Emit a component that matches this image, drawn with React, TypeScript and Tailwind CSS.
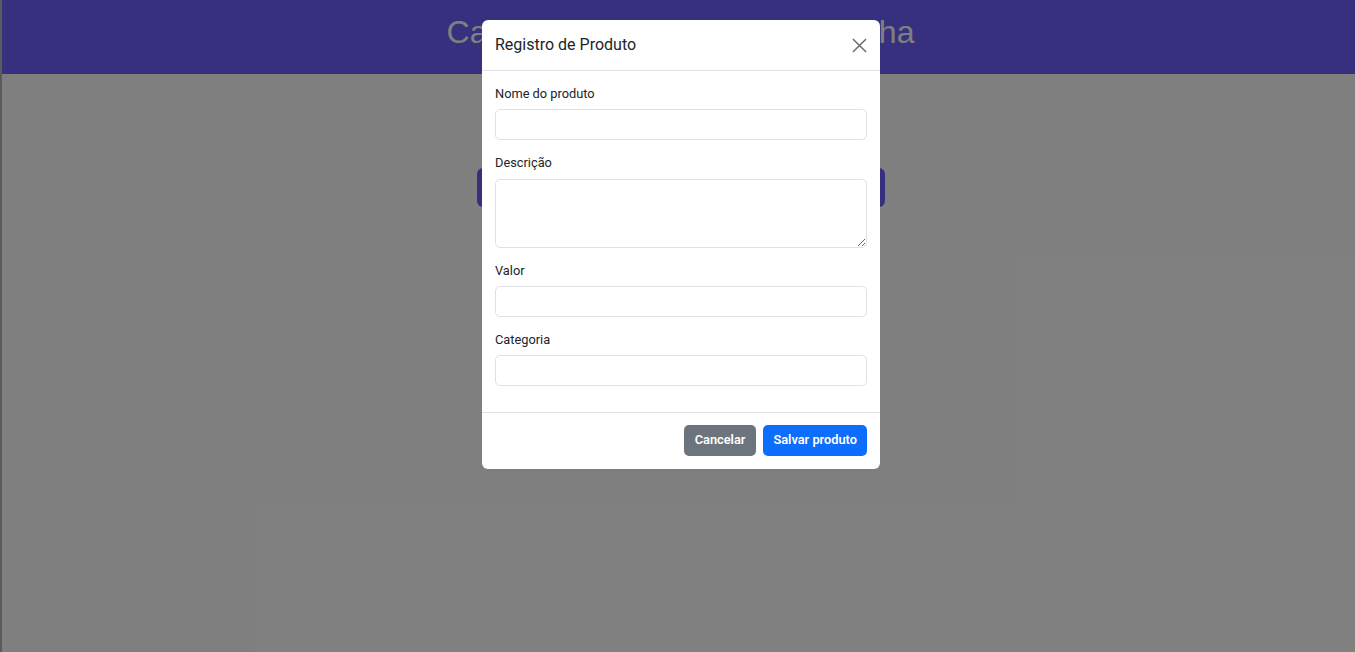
export default function App() {
  return (
    <div className="relative h-screen w-full overflow-hidden bg-white flex font-['Liberation_Sans',Arial,sans-serif]">
      {/* faixa lateral */}
      <div className="w-[2px] shrink-0 bg-[#b6b6b6]" />

      {/* página por baixo do modal */}
      <main className="flex-1 flex flex-col pl-[4px]">
        <header className="h-[74px] bg-[#6c60fe] flex items-center justify-center -ml-[4px] pl-[4px]">
          <h1 className="text-[32px] text-white leading-none -mt-[10px]">Cadastro de Produtos da Lojinha</h1>
        </header>
        <div className="flex justify-center pt-[94px]">
          <button className="w-[408px] h-[39px] rounded-[6px] bg-[#6c60fe] text-white text-base">
            Adicionar produto
          </button>
        </div>
      </main>

      {/* fundo escuro do modal */}
      <div className="absolute inset-0 bg-black/50 flex justify-center items-start pt-[20px] pl-[7px] font-['Roboto',sans-serif]">
        <div className="w-[398px] bg-white rounded-[6px] flex flex-col text-[#212529]">
          <div className="h-[51px] px-[13px] flex items-center justify-between border-b border-[#dee2e6]">
            <h5 className="text-[16px] leading-6">Registro de Produto</h5>
            <button className="w-[16px] h-[16px] flex items-center justify-center">
              <svg width="15" height="15" viewBox="0 0 16 16" fill="none" stroke="#6c6c6c" strokeWidth="1.6">
                <path d="M1 1 15 15M15 1 1 15" />
              </svg>
            </button>
          </div>

          <div className="p-[13px] text-[12.8px]">
            <div className="mb-[13px]">
              <label className="block leading-[19px] mb-[6px]">Nome do produto</label>
              <input className="block w-full h-[31px] rounded-[5px] border border-[#dee2e6]" />
            </div>
            <div className="mb-[13px]">
              <label className="block leading-[19px] mb-[7px]">Descrição</label>
              <textarea className="block w-full h-[69px] rounded-[5px] border border-[#dee2e6]" />
            </div>
            <div className="mb-[13px]">
              <label className="block leading-[19px] mb-[6px]">Valor</label>
              <input className="block w-full h-[31px] rounded-[5px] border border-[#dee2e6]" />
            </div>
            <div className="mb-[13px]">
              <label className="block leading-[19px] mb-[6px]">Categoria</label>
              <input className="block w-full h-[31px] rounded-[5px] border border-[#dee2e6]" />
            </div>
          </div>

          <div className="border-t border-[#dee2e6] h-[57px] px-[13px] pb-[2px] flex items-center justify-end gap-[7px]">
            <button className="h-[31px] px-[11px] rounded-[5px] bg-[#6c757d] text-white text-[12.8px] font-semibold">
              Cancelar
            </button>
            <button className="h-[31px] px-[10px] rounded-[5px] bg-[#0d6efd] text-white text-[12.8px] font-semibold">
              Salvar produto
            </button>
          </div>
        </div>
      </div>
    </div>
  );
}
